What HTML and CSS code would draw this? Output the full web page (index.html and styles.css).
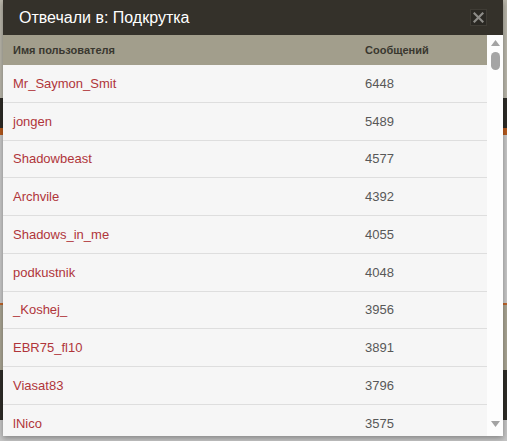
FILE: index.html
```html
<!DOCTYPE html>
<html lang="ru">
<head>
<meta charset="utf-8">
<title>Отвечали в: Подкрутка</title>
<link rel="stylesheet" href="styles.css">
</head>
<body>
<div class="backdrop">
  <div class="band band-top"></div>
  <div class="band band-dark"></div>
  <div class="band band-orange"></div>
  <div class="band band-light"></div>
  <div class="band band-orange-thin"></div>
  <div class="band band-tan"></div>
  <div class="band band-dark2"></div>
  <div class="band band-bottom"></div>
</div>
<div class="modal">
  <div class="modal-header">
    <span class="modal-title">Отвечали в: Подкрутка</span>
    <button class="close-btn" aria-label="Закрыть">
      <svg width="11" height="11" viewBox="0 0 11 11"><path d="M1.5 1.5 L9.5 9.5 M9.5 1.5 L1.5 9.5" stroke="#8d8c88" stroke-width="2.2" stroke-linecap="square"/></svg>
    </button>
  </div>
  <div class="modal-body">
    <div class="table">
      <div class="row head">
        <div class="cell">Имя пользователя</div>
        <div class="cell">Сообщений</div>
      </div>
      <div class="row"><div class="cell name">Mr_Saymon_Smit</div><div class="cell num">6448</div></div>
      <div class="row"><div class="cell name">jongen</div><div class="cell num">5489</div></div>
      <div class="row"><div class="cell name">Shadowbeast</div><div class="cell num">4577</div></div>
      <div class="row"><div class="cell name">Archvile</div><div class="cell num">4392</div></div>
      <div class="row"><div class="cell name">Shadows_in_me</div><div class="cell num">4055</div></div>
      <div class="row"><div class="cell name">podkustnik</div><div class="cell num">4048</div></div>
      <div class="row"><div class="cell name">_Koshej_</div><div class="cell num">3956</div></div>
      <div class="row"><div class="cell name">EBR75_fl10</div><div class="cell num">3891</div></div>
      <div class="row"><div class="cell name">Viasat83</div><div class="cell num">3796</div></div>
      <div class="row"><div class="cell name">lNico</div><div class="cell num">3575</div></div>
    </div>
    <div class="scrollbar">
      <svg class="arrow" width="9" height="6" viewBox="0 0 9 6"><path d="M0 6 L4.5 0 L9 6 Z" fill="#a3a3a3"/></svg>
      <div class="thumb"></div>
      <div class="track"></div>
      <svg class="arrow" width="9" height="6" viewBox="0 0 9 6"><path d="M0 0 L4.5 6 L9 0 Z" fill="#a3a3a3"/></svg>
    </div>
  </div>
</div>
</body>
</html>
```

FILE: styles.css
```css
html, body {
  margin: 0;
  padding: 0;
  height: 100%;
  overflow: hidden;
  background: #c4c4c4;
  font-family: "Liberation Sans", Arial, sans-serif;
}

.backdrop {
  display: flex;
  flex-direction: column;
}
.band { width: 100%; }
.band-top { height: 98px; background: #b9b6aa; }
.band-dark { height: 30px; background: #2e2c27; }
.band-orange { height: 7px; background: #b65a1e; }
.band-light { height: 168px; background: #c8c8c8; }
.band-orange-thin { height: 2px; background: #c0652a; }
.band-tan { height: 65px; background: #a9a593; }
.band-dark2 { height: 50px; background: #2f2d28; }
.band-bottom { height: 40px; background: #c6c6c6; }

.modal {
  position: absolute;
  left: 3px;
  top: 0;
  width: 500px;
  height: 436px;
  display: flex;
  flex-direction: column;
  background: #f6f6f6;
  box-shadow: 0 2px 6px rgba(0, 0, 0, 0.35);
}

.modal-header {
  height: 35px;
  flex: none;
  background: #34312a;
  display: flex;
  align-items: center;
  justify-content: space-between;
  padding: 0 16px 0 16px;
}
.modal-title {
  color: #ffffff;
  font-size: 16px;
  line-height: 35px;
}
.close-btn {
  width: 17px;
  height: 17px;
  margin: 0;
  padding: 0;
  border: 1px solid #3f3c35;
  background: #2a2823;
  display: flex;
  align-items: center;
  justify-content: center;
}

.modal-body {
  flex: 1;
  display: flex;
  min-height: 0;
}

.table {
  flex: 1;
  overflow: hidden;
}
.row {
  display: grid;
  grid-template-columns: 352px 1fr;
  height: 36.78px;
  border-bottom: 1px solid #dedede;
  background: #f6f6f6;
  align-items: center;
  font-size: 13px;
}
.row.head {
  height: 30px;
  border-bottom: none;
  background: #a29e8c;
  font-size: 11px;
  font-weight: bold;
  color: #39372f;
}
.cell { padding-left: 10px; }
.name { color: #b0353a; }
.num { color: #585858; }

.scrollbar {
  width: 16px;
  flex: none;
  background: #fdfdfd;
  display: flex;
  flex-direction: column;
  align-items: center;
  padding: 5px 0 9px 0;
}
.arrow { flex: none; }
.thumb {
  width: 9px;
  height: 18px;
  margin-top: 6px;
  border-radius: 4.5px;
  background: #a5a5a5;
}
.track { flex: 1; }
```
